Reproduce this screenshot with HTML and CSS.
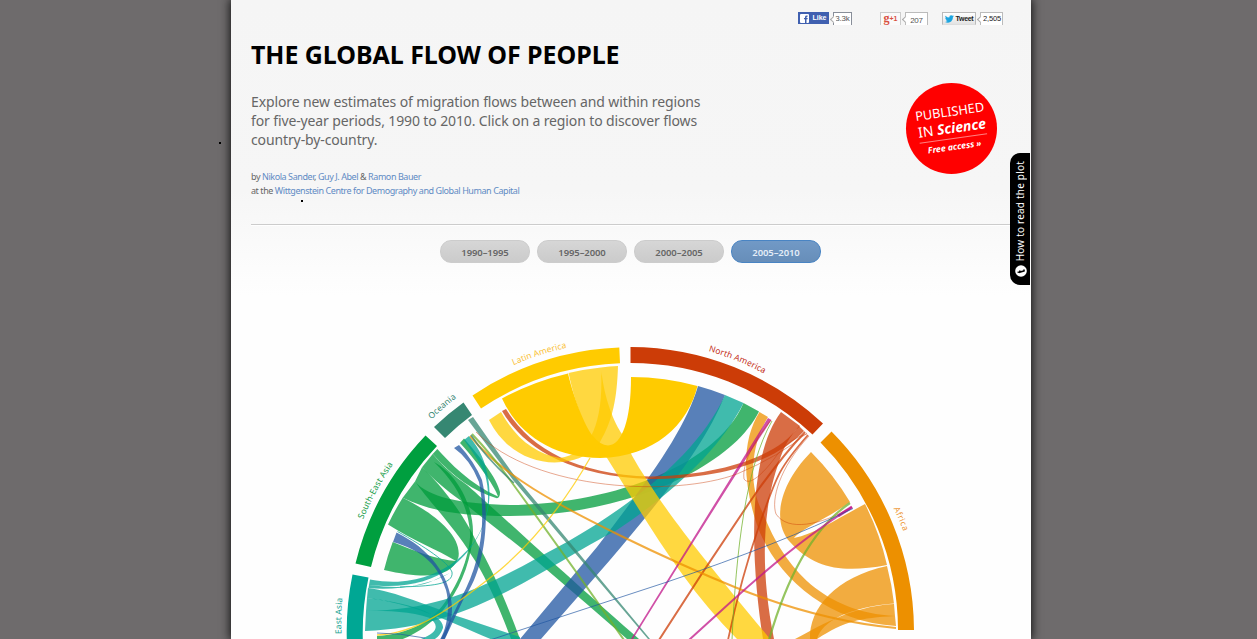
FILE: index.html
```
<!DOCTYPE html>
<html lang="en">
<head>
<meta charset="utf-8">
<title>The Global Flow of People</title>
<link rel="stylesheet" href="styles.css">
</head>
<body>
<main class="page">
  <header class="header">
    <div class="social">
      <div class="share share-like"><span class="btn like"><svg width="9" height="9" viewBox="0 0 9 9"><rect width="9" height="9" rx="1" fill="#fff"/><path d="M5 9V5.300H4V4h1V3q0-1.700 2.600-1.400v1.200Q6.500 2.600 6.500 3.400V4h1.200l-.2 1.300H6.500V9z" fill="#3f5fae"/></svg>Like</span><span class="count like-count">3.3k</span></div>
      <div class="share share-plus"><span class="btn plus"><b>g</b>+1</span><span class="count plus-count">207</span></div>
      <div class="share"><span class="btn tweet"><svg width="9" height="8" viewBox="0 0 24 20"><path d="M24 3l-3 2.500C21 14 15 20 8 20q-4.500 0-8-2.200 4 .2 7-2.200-3.500-.4-4.500-3.500h2Q1 11 .8 7l2 .6Q-.4 5 1.500 1q4 5 10 5.200Q11 0 16.500 0q2 0 3.500 1.500L23 .5 21.500 3z" fill="#1ba5e0"/></svg>Tweet</span><span class="count tweet-count">2,505</span></div>
    </div>
    <div class="intro">
      <div class="copy">
        <h1 class="title">THE GLOBAL FLOW OF PEOPLE</h1>
        <p class="lead">Explore new estimates of migration flows between and within regions<br>for five-year periods, 1990 to 2010. Click on a region to discover flows<br>country-by-country.</p>
        <p class="byline">by <a>Nikola Sander</a>, <a>Guy J. Abel</a> &amp; <a>Ramon Bauer</a><br>at the <a>Wittgenstein Centre for Demography and Global Human Capital</a></p>
      </div>
      <a class="badge"><span class="badge-text"><span class="pub">PUBLISHED</span><span class="sci">IN <b>Science</b></span><span class="free">Free access »</span></span></a>
    </div>
  </header>
  <nav class="periods">
    <a class="period">1990–1995</a><a class="period">1995–2000</a><a class="period">2000–2005</a><a class="period active">2005–2010</a>
  </nav>
  <svg class="chart" width="800" height="339" viewBox="231 300 800 339">
    <defs>
      <path id="latin-label" d="M513.500 365.200A290 290 0 0 1 620 341"/>
      <path id="north-label" d="M708.500 351.100A290 290 0 0 1 800 396"/>
      <path id="africa-label" d="M893.500 508.500A290 290 0 0 1 918 580"/>
      <path id="oceania-label" d="M431.500 419.500A290 290 0 0 1 500 370"/>
      <path id="southeast-label" d="M363.100 519.500A290 290 0 0 1 430 421"/>
      <path id="east-label" d="M341.500 634A290 290 0 0 1 352 545"/>
    </defs>
    <g class="ribbons">
      <path class="sea" d="M437.300 449C450 463 470 484 498 496.500C496 489 481 466 460 443L464 438.500C480 457 497 478 500 492Q500 499 496 498C475 492 453 477 432.700 454Z"/>
      <path class="sea" d="M432.700 454C444 467 454 476 467 485C490 505 580 588 639 639H627C588 605 550 572 520 547L460 500C446 490 434 480 422 467.300Z"/>
      <path class="sea" d="M422 467.300C436 480 462 510 477 543Q497 577 520 639H511Q489 580 470 553C458 532 428 500 415 481.500Z"/>
      <path class="sea" d="M434 462C462 477 476 515 472.500 540C469 568 458 591 444 609C428 628 404 643 377 645V636C410 634 432 620 443 605C462 580 471 548 470 532C468 508 458 485 434 462Z"/>
      <path class="sea" d="M415 481.500C428 497 460 504 510 505C600 505 715 470 743.500 403L759 411.500C730 470 620 516 510 516C460 516 430 511 402.700 497.700Z"/>
      <path class="sea" d="M402.700 497.700C430 511 462 534 458.500 557C452 577 428 580 384 570A254 254 0 0 1 392.700 542C412 550 438 560 456 561C438 550 412 540 388 524.500A265 265 0 0 1 402.700 497.700Z"/>
      <path class="blue" d="M698 386C685 430 650 478 597 547L520 639H541L610 560C665 495 705 445 725 395A254 254 0 0 0 698 386Z"/>
      <path class="east" d="M366 611C450 610 500 578 567 542C640 500 700 450 725 395L743.500 403C720 450 670 495 617 530C540 570 470 628 365 631Z"/>
      <path class="east" d="M370 579.500C410 587 435 574 450 565C480 545 495 512 485 474C478 459 471 450 464 440L469 436C480 449 486 463 488 478C495 515 476 548 452 567C430 582 405 589 369 585Z"/>
      <path class="east" d="M369 585C400 589 420 586 430 582L450 573C430 585 395 591 368.500 588Z"/>
      <path class="east" d="M368 588C395 591 430 607 463 618L520 637V643H500C450 622 415 604 367 598Z"/>
      <path class="east" d="M367 598C405 602 445 614 443 628Q439 639 430 641H415C438 634 440 626 430 618C410 611 390 611 366 611Z"/>
      <path class="east-line" d="M397.500 531.500C425 547 448 562 452 572C454 585 430 586 400 587"/>
      <path class="blue" d="M396.500 532.500C430 549 450 575 452 607C452 622 449 632 443 641H439C448 628 450 605 446 590C437 562 420 550 393 542Z"/>
      <path class="blue" d="M454 448Q470 459 479 482C487 522 480 565 461 598L440 641H444L464 598C486 568 490 515 482 480Q474 461 459 445Z"/>
      <path class="ora" d="M768 417C748 450 750 490 763 513C785 570 825 612 895 616L896 626C825 622 775 575 757 525C742 480 742 440 759.500 412Z"/>
      <path class="ora" d="M811 452C775 489 774 525 790 542C815 570 845 573 887 565A265 265 0 0 0 865 504C840 517 815 534 794 538C801 529 830 517 850 502A254 254 0 0 0 811 452Z"/>
      <path class="ora" d="M887 566C836 577 809 608 810 639H817C822 621 850 607 894 603.500A265 265 0 0 0 887 566Z"/>
      <path class="ora" d="M894 604C850 606 815 629 795 639H817C845 621 860 618 895 616Z"/>
      <path class="red" d="M781 412C745 460 752 570 763 639H774C758 560 765 500 779 462C784 446 790 436 800 426Z"/>
      <path class="red" d="M502 411C522 445 565 476 650 479C720 479 775 462 804 431L799 426C776 460 710 476 650 476.500C575 474 530 448 506 409Z"/>
      <path class="solid" d="M502 398.500A265 265 0 0 1 568 373.500C575 403 587 430 593 436Q600 445 608 445.500C622 445 631 420 631 377A254 254 0 0 1 697.500 386C688 425 654 457 600 458C555 457 520 437 502 398.500Z"/>
      <path class="lat" d="M568.500 373A265 265 0 0 1 601 367.500C604 400 615 424 622 434Q630 455 647 480C673 521 704 559 770 639H737C680 582 640 510 607 458C587 437 577 411 568.500 373Z"/>
      <path class="lat" d="M601 367.500A265 265 0 0 1 618 366C617 398 613 420 600 442Q590 457 569 461C540 467 507 455 489 420L501 412C516 439 536 454 560 458C590 454 604 424 601 367.500Z"/>
      <path class="oce" d="M468 420L473 417Q491 443 514 475L650 639H648L513 480Z"/>
      <path class="mag" d="M768 418L771.500 420Q727 487 633 639H631Q725 487 768 418Z"/>
    </g>
    <g class="lines">
      <path stroke="#cc3c07" stroke-width=".6" d="M476 432C535 492 675 497 737 474Q780 456 807 433"/>
      <path stroke="#cc3c07" stroke-width=".6" d="M771 420C753 443 742 464 744 479C750 488 767 469 777 455Q790 438 807 434M809 436C779 468 771 500 776 514C788 532 820 525 851 508"/>
      <path stroke="#cc3c07" stroke-width="2" d="M805 432Q784 454 758 490Q708 563 659 640"/>
      <path stroke="#cc3c07" stroke-width="1.800" d="M808 435C779 468 777 475 760 523Q741 578 728 640"/>
      <path stroke="#71b12b" stroke-width="1" d="M772 421C746 466 736 550 732 640"/>
      <path stroke="#ed9000" stroke-width="2" d="M470 436Q492 462 523 482C565 511 670 561 737 588Q820 621 896 628"/>
      <path stroke="#71b12b" stroke-width="2" d="M472 434Q492 455 510 480Q567 558 624 640"/>
      <path stroke="#368772" stroke-width="1.600" d="M471 435Q485 457 514 483"/>
      <path stroke="#ffcb00" stroke-width="1.300" d="M590 458C565 502 535 540 500 570C450 610 415 634 377 635"/>
      <path stroke="#71b12b" stroke-width="2.200" d="M850 503C810 530 785 584 769 640"/>
      <path stroke="#c0168a" stroke-width="2" d="M852 507Q799 540 733 600L689 640"/>
      <path stroke="#c0168a" stroke-width="3" d="M852 507L838 516"/>
      <path stroke="#2055a1" stroke-width=".9" d="M853 508.500Q782 543 667 582L490 640M377 633Q400 633 425 638"/>
    </g>
    <g class="ring">
      <path fill="#cc3c07" d="M630.500 347A283.500 283.500 0 0 1 823 423.500L812.500 434.500A267.500 267.500 0 0 0 630.500 363Z"/>
      <path fill="#ed9000" d="M831.500 431.500A283.500 283.500 0 0 1 914 630H898A267.500 267.500 0 0 0 820.500 442.500Z"/>
      <path fill="#ffcb00" d="M472.500 395.500A283.500 283.500 0 0 1 619.300 347.500L620 363.300A267.500 267.500 0 0 0 481 408.500Z"/>
      <path fill="#368772" d="M434 427A283.500 283.500 0 0 1 463.500 402.500L472 415A267.500 267.500 0 0 0 445 438Z"/>
      <path fill="#009f3f" d="M355.500 563.500A283.500 283.500 0 0 1 425.500 435.500L437 446A267.500 267.500 0 0 0 371 567Z"/>
      <path fill="#00a794" d="M352.500 574.500A283.500 283.500 0 0 0 347 645H363A267.500 267.500 0 0 1 368.500 577.500Z"/>
    </g>
    <g class="labels">
      <text fill="#fac137"><textPath href="#latin-label" textLength="56">Latin America</textPath></text>
      <text fill="#c42f20"><textPath href="#north-label" textLength="60">North America</textPath></text>
      <text fill="#ed9330"><textPath href="#africa-label" textLength="25">Africa</textPath></text>
      <text fill="#368772"><textPath href="#oceania-label" textLength="33">Oceania</textPath></text>
      <text fill="#159c46"><textPath href="#southeast-label" textLength="63">South-East Asia</textPath></text>
      <text fill="#16a292"><textPath href="#east-label" textLength="36">East Asia</textPath></text>
    </g>
  </svg>
  <aside class="help"><svg width="12" height="12" viewBox="0 0 12 12"><circle cx="6" cy="6" r="5.800" fill="#fff"/><path d="M2.600 6.800H3.900M9 4.200V5.500L4.800 6.700V5.200" transform="translate(0 .4)" stroke="#000" stroke-width="1.600" fill="none"/></svg><span>How to read the plot</span></aside>
</main>
<i class="speck speck-a"></i><i class="speck speck-b"></i>
</body>
</html>
```
FILE: styles.css
```
* { box-sizing: border-box; }
body { margin: 0; height: 639px; overflow: hidden; background: #6e6b6c; font-family: "Noto Sans", "Open Sans", sans-serif; color: #666; }
.page { position: relative; width: 800px; height: 639px; margin-left: 231px; background: linear-gradient(#f5f5f5 0, #f6f6f6 190px, #fefefe 295px); box-shadow: 0 0 9px 1px #111; }
.header { height: 225px; margin-left: 20px; width: 759px; border-bottom: 1px solid #ccc; box-shadow: 0 1px 0 #fff; }
.social { display: flex; height: 36px; padding: 12px 0 0 547px; font: 7px/12px "Liberation Sans", sans-serif; }
.share { display: flex; gap: 4px; }
.share-like { width: 82px; }
.share-plus { width: 62px; }
.btn, .count { height: 13px; display: flex; align-items: center; justify-content: center; white-space: nowrap; }
.btn { gap: 3px; }
.like { width: 31px; height: 12px; background: #4060b0; color: #fff; font-weight: bold; }
.count { border: 1px solid #bbb; border-bottom: 0; background: #fff; color: #555; position: relative; font-size: 8px; letter-spacing: -.2px; }
.count::before { content: ""; position: absolute; left: -3px; top: 4px; width: 4px; height: 4px; background: #fff; border-left: 1px solid #aaa; border-bottom: 1px solid #aaa; transform: rotate(45deg); }
.like-count { width: 19px; border-color: #888e99; }
.plus { width: 21px; border: 1px solid #ccc; border-bottom: 0; color: #d9503f; gap: 0; background: #fafafa; font-weight: bold; }
.plus b { font: bold 12px/8px "Liberation Serif", serif; margin-top: -3px; }
.plus-count { width: 23px; padding-top: 3px; }
.tweet { width: 34px; gap: 2px; border: 1px solid #bbb; border-bottom-color: #ddd; background: linear-gradient(#fff, #e3e3e3); color: #222; font-weight: bold; letter-spacing: -.3px; }
.tweet-count { width: 23px; color: #222; font-size: 7.500px; padding-left: 1px; }
.intro { display: flex; justify-content: space-between; }
.copy { width: 500px; }
.title { margin: 0; font-size: 25px; line-height: 36px; font-weight: 700; color: #000; white-space: nowrap; letter-spacing: -.06px; }
.lead { margin: 20px 0 0; font-size: 14px; line-height: 19px; white-space: nowrap; letter-spacing: -.12px; }
.byline { margin: 21px 0 0; font-size: 9px; line-height: 14px; white-space: nowrap; letter-spacing: -.43px; }
.byline a { color: #5f8bc4; }
.badge { width: 91px; height: 91px; margin: 47px 13px 0 0; border-radius: 50%; background: #f00; color: #fff; display: flex; align-items: center; justify-content: center; }
.badge-text { width: 74px; transform: rotate(-8deg); display: flex; flex-direction: column; align-items: center; white-space: nowrap; }
.pub { font-size: 12.800px; line-height: 15px; }
.sci { font-size: 14px; line-height: 17px; }
.sci b, .free { font-style: italic; font-weight: 700; }
.free { width: 68px; margin-top: 2px; padding-top: 3px; border-top: 1px solid #ff8080; text-align: center; font-size: 8.700px; line-height: 11px; }
.periods { display: flex; gap: 7px; padding: 15px 0 0 209px; height: 75px; }
.period { width: 90px; height: 23px; border: 1px solid #ccc; border-radius: 11px; background: linear-gradient(#d6d6d6, #cbcbcb); color: #666; text-align: center; font-size: 9.500px; line-height: 23px; font-weight: 600; letter-spacing: -.1px; }
.active { background: linear-gradient(#7199c6, #678eb9); border-color: #4984c3; color: #e4edf7; }
.chart { display: block; }
.ribbons path { fill-opacity: .75; }
.ribbons .solid { fill: #ffcb00; fill-opacity: 1; }
.sea { fill: #009c3c; }
.blue { fill: #2055a1; }
.east { fill: #00a491; }
.ribbons .east-line { fill: none; stroke: #00a491; stroke-width: 1; stroke-opacity: .75; }
.ora { fill: #ed9000; }
.red { fill: #cc3c07; }
.lat { fill: #ffcb00; }
.oce { fill: #368772; }
.mag { fill: #c0168a; }
.lines path { fill: none; stroke-opacity: .75; }
.labels { font-size: 8.500px; }
.help { position: absolute; left: 779px; top: 153px; width: 20px; height: 132px; border-radius: 10px 0 0 10px; background: #000; color: #fff; writing-mode: vertical-rl; font-size: 10px; letter-spacing: .2px; }
.help svg { position: absolute; left: 5px; top: 112px; }
.help span { position: absolute; left: 2px; bottom: 24px; line-height: 17px; transform: rotate(180deg); white-space: nowrap; }
.speck { position: absolute; width: 2px; height: 2px; background: #000; }
.speck-a { left: 219px; top: 142px; }
.speck-b { left: 301px; top: 200px; }
```
